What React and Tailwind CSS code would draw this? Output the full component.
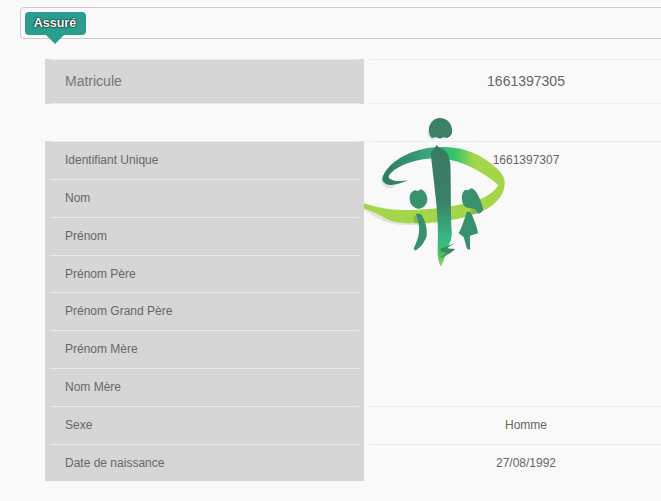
import React from 'react';

const font = { fontFamily: '"Liberation Sans", Arial, sans-serif' };

const identity = [
  { label: 'Identifiant Unique', value: '1661397307', h: 'h-[39px]', lift: true },
  { label: 'Nom', h: 'h-[37.8px]' },
  { label: 'Prénom', h: 'h-[37.8px]' },
  { label: 'Prénom Père', h: 'h-[37.8px]' },
  { label: 'Prénom Grand Père', h: 'h-[37.8px]', lift: true },
  { label: 'Prénom Mère', h: 'h-[37.8px]', lift: true },
  { label: 'Nom Mère', rightLine: true, h: 'h-[37.8px]' },
  { label: 'Sexe', value: 'Homme', rightLine: true, h: 'h-[37.8px]' },
  { label: 'Date de naissance', value: '27/08/1992', last: true, h: 'h-[36.6px]' },
];

function Logo() {
  return (
    <svg className="absolute left-[350px] top-[105px] z-0" width="170" height="170" viewBox="0 0 510 510">
      <defs>
        <linearGradient id="arc" gradientUnits="userSpaceOnUse" x1="98" y1="0" x2="470" y2="0">
          <stop offset="0" stopColor="#2f7a5e" />
          <stop offset="0.28" stopColor="#379a74" />
          <stop offset="0.42" stopColor="#38b082" />
          <stop offset="0.58" stopColor="#33c46c" />
          <stop offset="0.74" stopColor="#a4d64a" />
          <stop offset="1" stopColor="#a4d64a" />
        </linearGradient>
        <linearGradient id="body" gradientUnits="userSpaceOnUse" x1="0" y1="120" x2="0" y2="485">
          <stop offset="0" stopColor="#3a7a64" />
          <stop offset="0.45" stopColor="#3a7f66" />
          <stop offset="0.76" stopColor="#38b682" />
          <stop offset="0.9" stopColor="#4cc068" />
          <stop offset="1" stopColor="#a4d64a" />
        </linearGradient>
      </defs>

      {/* soft shadow */}
      <g fill="#e2e2e2">
        <path d="M42 316 C62 324 85 350 135 358 C170 362 210 360 240 356 L240 345 L120 335 L60 312 Z" />
        <path d="M93 218 C90 232 100 252 126 250 L140 240 L105 232 Z" />
        <path d="M234 72 C228 88 236 104 250 106 L250 96 L240 84 Z" />
      </g>

      {/* lower ribbon */}
      <path
        d="M42 295 C62 300 80 308 120 313 C150 316 175 315 200 314 C250 313 320 306 390 283 C415 272 435 258 445 240 L463 235 C466 255 452 282 425 302 C395 324 345 338 300 346 C265 352 225 356 190 355 C160 354 135 354 115 344 C90 332 70 318 42 312 Z"
        fill="#a4d64a"
      />
      <path d="M190 332 L205 330 L210 354 L192 354 Z" fill="#8fb84a" />
      <path d="M362 312 L376 310 L380 326 L368 328 Z" fill="#8fb84a" />

      {/* upper arc with its thin tail */}
      <path
        d="M98 215 C120 165 190 130 258 127 C335 120 395 148 440 190 C458 207 468 225 463 240 L444 240 C425 222 396 202 350 180 C318 167 288 160 250 160 C205 162 150 176 122 205 C110 218 118 224 135 227 C148 229 160 228 174 226 C155 235 130 242 115 239 C100 235 95 225 98 215 Z"
        fill="url(#arc)"
      />

      {/* head */}
      <path d="M237 80 C234 60 248 46 256 42 C268 37 284 39 294 48 C304 58 308 70 306 82 C305 92 298 96 292 99 L280 97 L270 101 L258 97 L246 99 C240 94 238 88 237 80 Z" fill="#3a8166" />
      {/* body */}
      <path d="M259 120 L268 128 L284 136 L295 150 L301 176 C303 230 302 300 304 360 C306 385 306 400 299 415 C291 430 286 460 272 485 C266 470 262 458 263 430 C265 380 263 320 255 260 C251 220 245 175 242 142 C248 134 256 130 259 120 Z" fill="url(#body)" />
      <path d="M270 432 L316 414 L290 430 L316 432 C302 445 285 454 268 460 L290 444 L274 440 Z" fill="#3a8a68" />

      {/* left child */}
      <path d="M179 282 C178 268 186 258 196 256 L204 258 L212 253 C224 256 233 270 232 286 C230 302 216 313 204 311 C190 309 180 298 179 282 Z" fill="#38906c" />
      <path d="M198 326 L212 326 C226 345 232 370 230 392 C224 414 208 430 195 437 L191 430 C202 408 209 388 207 365 C205 350 201 338 198 326 Z" fill="#38906c" />

      {/* right child */}
      <path d="M336 285 C334 268 340 258 346 254 L354 256 L364 250 C380 254 390 278 400 314 C396 322 388 326 384 326 L375 312 L362 310 C348 310 338 302 336 285 Z" fill="#38906c" />
      <path d="M350 320 L362 320 C372 345 382 365 384 385 L360 392 L360 434 L351 432 L341 396 L326 385 C336 365 344 342 350 320 Z" fill="#38906c" />
    </svg>
  );
}

export default function App() {
  return (
    <div style={font} className="relative w-[661px] h-[501px] overflow-hidden bg-[#f9f9f9] text-[#666]">
      {/* Section header */}
      <div className="ml-5 mt-[7px] h-8 w-[660px] rounded border border-[#ccc] bg-[#fafafa]"></div>
      <div className="absolute left-[25px] top-3 flex h-[23px] w-[61px] items-center justify-center rounded bg-[#2a9d8f] pb-px pr-px text-[12.5px] font-bold text-white [text-shadow:0_0_2px_#000,0_0_1px_#000]">
        Assuré
      </div>
      <div className="absolute left-[46px] top-[35px] h-0 w-0 border-x-[9px] border-t-[9px] border-x-transparent border-t-[#2a9d8f]"></div>

      <Logo />

      {/* Matricule */}
      <div className="ml-[45px] mt-[20px] flex h-[45px] w-[643px]">
        <div className="relative z-10 w-[319px] bg-[#d6d6d6] px-[5px]">
          <div className="flex h-full items-center border-y border-[#e6e9f8] pb-px pl-[15px] text-sm text-[#757575]">Matricule</div>
        </div>
        <div className="w-[324px] px-[5px]">
          <div className="flex h-full items-center justify-center border-y border-[#eceef8] pb-px text-sm">1661397305</div>
        </div>
      </div>

      {/* Identity rows */}
      <div className="ml-[45px] mt-[37px] flex w-[643px] flex-col">
        {identity.map((row, i) => (
          <div key={row.label} className={`flex ${row.h}`}>
            <div className="relative z-10 w-[319px] bg-[#d6d6d6] px-[5px]">
              <div className={`flex h-full items-center pl-[15px] text-xs ${row.lift ? 'pb-px' : ''} ${row.last ? '' : 'border-b border-[#e6e9f8]'} ${i === 0 ? 'border-t border-t-[#e6e9f8]' : ''}`}>
                {row.label}
              </div>
            </div>
            <div className="w-[324px] px-[5px]">
              <div className={`flex h-full items-center justify-center text-xs ${row.lift ? 'pb-[2px]' : ''} ${row.rightLine ? 'border-b border-[#e6e9f8]' : ''} ${i === 0 ? 'border-t border-t-[#e6e9f8]' : ''}`}>
                {row.value}
              </div>
            </div>
          </div>
        ))}
      </div>
    </div>
  );
}
